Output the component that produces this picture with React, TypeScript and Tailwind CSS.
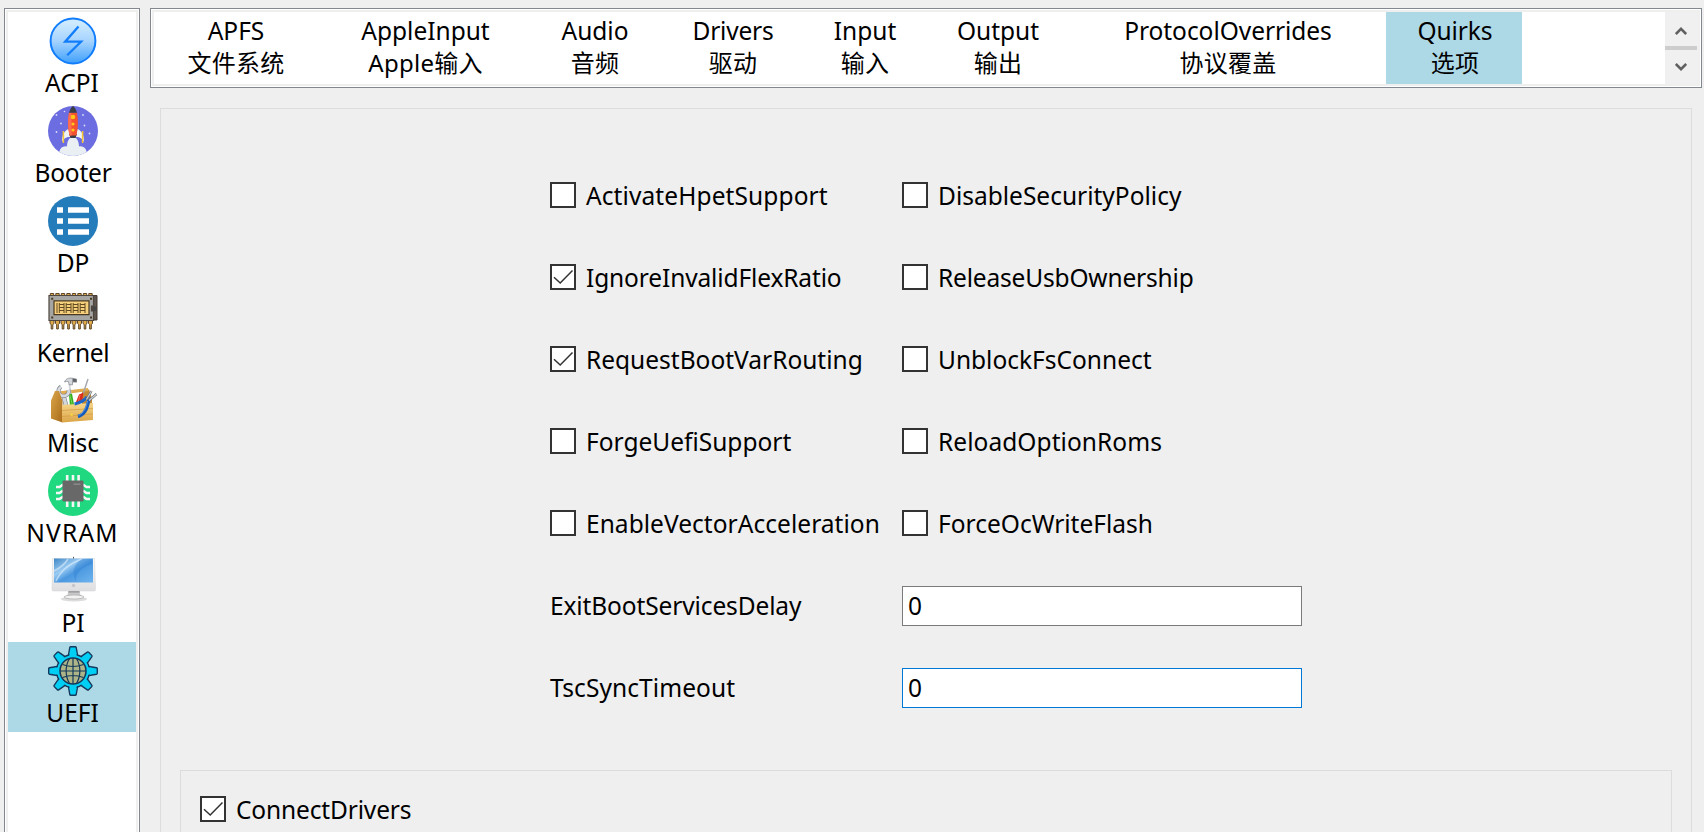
import type { ReactNode } from "react";

const AcpiIcon = () => (
  <svg viewBox="0 0 50 50" className="size-[50px]">
    <defs>
      <linearGradient id="acpi" x1="0" y1="0" x2="0" y2="1">
        <stop offset="0.1" stopColor="#cdeaff" />
        <stop offset="0.5" stopColor="#a5d3ff" />
        <stop offset="1" stopColor="#3fa0fb" />
      </linearGradient>
    </defs>
    <circle cx="25" cy="25" r="22.4" fill="url(#acpi)" stroke="#127dfb" strokeWidth="2" />
    <path d="M30.5 10.5 17.2 25.7H33L19.2 39.3" fill="none" stroke="#127dfb" strokeWidth="2.3" />
  </svg>
);

const BooterIcon = () => (
  <svg viewBox="0 0 50 50" className="size-[50px]">
    <defs>
      <clipPath id="sky">
        <circle cx="25" cy="25" r="25" />
      </clipPath>
    </defs>
    <g clipPath="url(#sky)">
      <rect width="50" height="50" fill="#6c6de0" />
      <g fill="#d9dcf8">
        <circle cx="16.5" cy="5.5" r=".8" />
        <circle cx="8.5" cy="9" r=".9" />
        <circle cx="13" cy="17.5" r=".9" />
        <circle cx="8.5" cy="26" r=".9" />
        <circle cx="35" cy="9" r=".9" />
        <circle cx="36.5" cy="19.5" r=".9" />
        <circle cx="41.5" cy="27.5" r=".9" />
      </g>
      <path d="M11.500 50C10 44 14 39.500 19 40.500 19 35 21.500 31 25 31s6 4 6 9.500c5-1 9 3.500 7.500 9.500Z" fill="#e9eff3" />
      <path d="M20.500 23C16 25 14 29 14 36c3-5 5-5 8.500-5Z" fill="#eef3f6" />
      <path d="M29.500 23C34 25 36 29 36 36c-3-5-5-5-8.500-5Z" fill="#eef3f6" />
      <path d="M15.400 25v12M34.600 25v12" stroke="#f5c431" strokeWidth="1.500" />
      <path d="M21 28h8l-1.500 4h-5Z" fill="#3b3f44" />
      <path d="M21 6.500h8c1.400 8 1.200 16-.6 23h-6.800c-1.800-7-2-15-.6-23Z" fill="#f4512f" />
      <path d="M21 6.500h2.500v23h-1.900c-1.800-7-2-15-.6-23Z" fill="#ff6e50" />
      <path d="M21 6.800c1-3.200 2.500-5.800 4-6.800 1.500 1 3 3.600 4 6.800Z" fill="#3b3f44" />
      <circle cx="25" cy="11" r="2.300" fill="#ffc61a" />
      <circle cx="25" cy="18" r="1.600" fill="#ffc61a" />
      <circle cx="25" cy="24" r="1.600" fill="#ffc61a" />
    </g>
  </svg>
);

const DpIcon = () => (
  <svg viewBox="0 0 50 50" className="size-[50px]">
    <circle cx="25" cy="25" r="25" fill="#247cba" />
    <path
      d="M9 11.200h6v5.600H9zM9 22.200h6v5.600H9zM9 33.200h6v5.600H9zM20 11.200h21v5.600H20zM20 22.200h21v5.600H20zM20 33.200h21v5.600H20z"
      fill="#fff"
    />
  </svg>
);

const legs = [4, 9.5, 15, 20.5, 26, 31.5, 37, 42.5];

const KernelIcon = () => (
  <svg viewBox="0 0 50 50" className="size-[50px]">
    <path d="M44 9.500h5V34h-5z" fill="#5f5650" stroke="#45392f" />
    {legs.map((x) => (
      <g key={x} fill="#e0ab4c" stroke="#5c4426" strokeWidth="1">
        <path d={`M${x - 1.7} 7.500h3.400v3h-3.400z`} />
        <path d={`M${x - 2} 34h4v3.500l-1.200 1v4.500h-1.600v-4.500l-1.200-1z`} />
      </g>
    ))}
    <path d="M1 9.500h44.500V20h-2v5h2v9.500H1z" fill="#a5a5a3" stroke="#4e463e" strokeWidth="1.200" />
    <path d="M45 20.500h3.500v4.500H45z" fill="#454545" />
    <path d="M6 14.800h35v13.800H6z" fill="#f7d07b" stroke="#4a3a22" strokeWidth="1.200" />
    <g fill="#4a3a22">
      <path d="M3.200 11.700h2v2h-2zM42 11.700h2v2h-2zM3.200 30.500h2v2h-2zM42 30.500h2v2h-2z" />
    </g>
    <path
      d="M9 17v10M11.300 17v10M16 17v10M18.200 17v10M23 17v10M25.200 17v10M30 17v10M32.200 17v10M37 17v10M11.300 18.500H16M11.300 21.500H16M11.300 24.500H16M18.200 18.500H23M18.200 21.500H23M18.200 24.500H23M25.200 18.500H30M25.200 21.500H30M25.200 24.500H30M32.200 18.500H37M32.200 21.500H37M32.200 24.500H37"
      stroke="#604922"
      strokeWidth="1"
    />
  </svg>
);

const MiscIcon = () => (
  <svg viewBox="0 0 50 50" className="size-[50px]">
    <defs>
      <linearGradient id="wood" x1="0" y1="0" x2="0" y2="1">
        <stop offset="0" stopColor="#f6d68a" />
        <stop offset="1" stopColor="#dba548" />
      </linearGradient>
      <linearGradient id="woodSide" x1="0" y1="0" x2="1" y2="1">
        <stop offset="0" stopColor="#dba548" />
        <stop offset="1" stopColor="#a86b1b" />
      </linearGradient>
    </defs>
    <path d="M34 13.500h7l3 9v10H34z" fill="#c48b37" />
    <path d="M10 15.500 40 12v3L12 19z" fill="#e0ac52" />
    <path d="M21.500 8 23.500 30" stroke="#d6d9dd" strokeWidth="2" />
    <path d="M21 18.500 24 17.500 26.500 31H22z" fill="#38b01e" />
    <path d="M22 19 24.500 30" stroke="#8be06c" strokeWidth=".7" />
    <path d="M16.500 6C18 2.500 21 1.700 24 2.200l4.500.8v3.200L24.500 6v2.800h-3.400L20.500 5.500C19 5.200 18 5.400 16.500 6z" fill="#d5d8dc" stroke="#7f8389" strokeWidth=".7" />
    <path d="M24.500 2.500 28.500 3.200v2.800l-4-.3z" fill="#5f6368" />
    <path d="M40 3 35 18" stroke="#a3a6ab" strokeWidth="1.400" />
    <path d="M31 18.500 35.500 16.500 34 26H28z" fill="#dd2c1c" />
    <path d="M32 19 30.500 25" stroke="#f4796c" strokeWidth=".8" />
    <path d="M18.500 31 15.500 20" stroke="#7f848a" strokeWidth="4.600" />
    <path d="M18.500 31 15.500 20" stroke="#d3d6da" strokeWidth="3.200" />
    <path d="M13 10.800C9.500 13 9.500 18 13.500 19.500s8-1 7.200-5.700" fill="none" stroke="#7f848a" strokeWidth="4" />
    <path d="M13 10.800C9.500 13 9.500 18 13.500 19.500s8-1 7.200-5.700" fill="none" stroke="#d8dbdf" strokeWidth="2.700" />
    <path d="M3 24.500 7 15h4L14.500 25v21.500L3 42.500z" fill="url(#woodSide)" />
    <path d="M14 29 45 27V44L14 46.500z" fill="url(#wood)" />
    <path d="M14 34.500 45 32.500M14 40.500 45 38" stroke="#d39b42" strokeWidth=".7" />
    <circle cx="23.500" cy="38.500" r="1.500" fill="#f5cf45" />
    <path d="M26.500 28C31 27 35.500 25.500 39 21" fill="none" stroke="#1c65c6" strokeWidth="3" />
    <path d="M30 40.500C37.500 38.500 39.500 31 41 23" fill="none" stroke="#165bbc" strokeWidth="3.400" />
    <path d="M30.500 39.500C36 37 38.500 31 39.500 25" fill="none" stroke="#5d9eea" strokeWidth=".9" />
    <path d="M38.500 23.500 43.500 15M41 24.500 48.500 18M40 20l3 4" stroke="#6f747a" strokeWidth="2.400" />
    <path d="M38.500 23.500 43.500 15M41 24.500 48.500 18" stroke="#cdd0d4" strokeWidth="1.100" />
  </svg>
);

const NvramIcon = () => (
  <svg viewBox="0 0 50 50" className="size-[50px]">
    <circle cx="25" cy="25" r="25" fill="#1fd87f" />
    <path
      d="M19.200 9v32M25 9v32M30.600 9v32M8 21h3.500l3-2H17M8 27h3.500l3-2H17M8 33h3.500l3-2H17M42 21h-3.500l-3-2H33M42 27h-3.500l-3-2H33M42 33h-3.500l-3-2H33"
      fill="none"
      stroke="#f4f7f5"
      strokeWidth="2.600"
    />
    <rect x="14.500" y="14.500" width="21" height="21" rx="1.200" fill="#686868" />
    <path d="M25.500 18.200h7" stroke="#8b8b8b" strokeWidth="1.500" />
  </svg>
);

const PiIcon = () => (
  <svg viewBox="0 0 50 50" className="size-[50px]">
    <defs>
      <linearGradient id="screen" x1="0" y1="0" x2="1" y2="1">
        <stop offset="0" stopColor="#3f86c6" />
        <stop offset="0.350" stopColor="#9bcbf2" />
        <stop offset="0.550" stopColor="#4b98e0" />
        <stop offset="1" stopColor="#6fb4ee" />
      </linearGradient>
      <linearGradient id="chin" x1="0" y1="0" x2="0" y2="1">
        <stop offset="0" stopColor="#fbfbfb" />
        <stop offset="1" stopColor="#dedee0" />
      </linearGradient>
    </defs>
    <ellipse cx="26" cy="43" rx="13" ry="2.500" fill="#dcdcdc" />
    <path d="M20.500 34h11l1.200 6h-13.400z" fill="#c9c9cb" />
    <path d="M20.500 34.500h11v2h-11z" fill="#8e8e92" />
    <ellipse cx="26" cy="41" rx="10" ry="2" fill="#f2f2f2" stroke="#a8a8aa" strokeWidth=".7" />
    <path d="M4.500 2.500h42l1 31q0 1.500-1.500 1.500H5.500Q4 35 4 33.500z" fill="url(#chin)" stroke="#d2d2d4" strokeWidth=".5" />
    <path d="M6 2.500h39V26.500H6z" fill="url(#screen)" />
    <path d="M8 25C12 16 20 8 34 3M6 15C12 12 17 8 20 3" fill="none" stroke="#dff0fd" strokeOpacity=".6" strokeWidth="1.600" />
    <path d="M28 26C27 20 31 12 44 8V3H34C26 8 23 16 28 26z" fill="#2f7fd2" fillOpacity=".4" />
    <path d="M25.500.8v1.700" stroke="#55585c" strokeWidth="1" />
    <circle cx="25.500" cy="29.500" r="1.700" fill="#c6c6ca" />
  </svg>
);

const teeth = [0, 45, 90, 135, 180, 225, 270, 315];

const UefiIcon = () => (
  <svg viewBox="0 0 50 50" className="size-[50px]">
    <g fill="#00cff5" stroke="#15395c" strokeWidth="1.400" strokeLinejoin="round">
      {teeth.map((a) => (
        <path key={a} d="M20.200 10.500 21.800 1.500q.2-.8 1-.8h4.400q.8 0 1 .8l1.600 9z" transform={`rotate(${a} 25 25)`} />
      ))}
      <circle cx="25" cy="25" r="16.500" />
    </g>
    {teeth.map((a) => (
      <path key={a} d="M21 11.500 22 6h6l1 5.500z" fill="#00cff5" transform={`rotate(${a} 25 25)`} />
    ))}
    <circle cx="25" cy="25" r="13" fill="#adb487" stroke="#15395c" strokeWidth="1.500" />
    <path
      d="M25 12v26M12 25h26M14.500 18.500q10.500 4 21 0M14.500 31.500q10.500-4 21 0M21.500 12.500C17 20 17 30 21.500 37.500M28.500 12.500C33 20 33 30 28.500 37.500"
      fill="none"
      stroke="#15395c"
      strokeWidth="1.200"
    />
  </svg>
);

const sections: { name: string; icon: ReactNode; text: string }[] = [
  { name: "ACPI", icon: <AcpiIcon />, text: "mr-[2px]" },
  { name: "Booter", icon: <BooterIcon />, text: "tracking-[-0.2px]" },
  { name: "DP", icon: <DpIcon />, text: "" },
  { name: "Kernel", icon: <KernelIcon />, text: "tracking-[-0.35px]" },
  { name: "Misc", icon: <MiscIcon />, text: "" },
  { name: "NVRAM", icon: <NvramIcon />, text: "tracking-[1.2px] mr-[1px]" },
  { name: "PI", icon: <PiIcon />, text: "" },
  { name: "UEFI", icon: <UefiIcon />, text: "mr-[1px]" },
];

const tabs = [
  { name: "APFS", label: "文件系统", box: "w-[164px]", text: "" },
  { name: "AppleInput", label: "Apple输入", box: "w-[215px]", text: "" },
  { name: "Audio", label: "音频", box: "w-[124px]", text: "" },
  { name: "Drivers", label: "驱动", box: "w-[152px]", text: "tracking-[-0.2px]" },
  { name: "Input", label: "输入", box: "w-[112px]", text: "" },
  { name: "Output", label: "输出", box: "w-[154px]", text: "" },
  { name: "ProtocolOverrides", label: "协议覆盖", box: "w-[306px] mr-[5px]", text: "tracking-[-0.05px]" },
  { name: "Quirks", label: "选项", box: "w-[136px] pl-[2px] bg-[#add8e6]", text: "tracking-[-0.1px]" },
];

const quirks = [
  { name: "ActivateHpetSupport", on: false, text: "tracking-[0.1px]" },
  { name: "DisableSecurityPolicy", on: false, text: "" },
  { name: "IgnoreInvalidFlexRatio", on: true, text: "tracking-[-0.13px]" },
  { name: "ReleaseUsbOwnership", on: false, text: "tracking-[-0.18px]" },
  { name: "RequestBootVarRouting", on: true, text: "" },
  { name: "UnblockFsConnect", on: false, text: "" },
  { name: "ForgeUefiSupport", on: false, text: "" },
  { name: "ReloadOptionRoms", on: false, text: "tracking-[0.06px]" },
  { name: "EnableVectorAcceleration", on: false, text: "tracking-[0.04px]" },
  { name: "ForceOcWriteFlash", on: false, text: "" },
];

const delays = [
  { name: "ExitBootServicesDelay", border: "border-[#7a7a7a]", text: "tracking-[-0.12px]" },
  { name: "TscSyncTimeout", border: "border-[#0078d7]", text: "tracking-[0.08px]" },
];

function Check({ name, on, text }: { name: string; on: boolean; text: string }) {
  return (
    <div className="flex h-[26px] items-center">
      <span className="flex size-[26px] shrink-0 items-center justify-center border-2 border-[#333] bg-white">
        {on && (
          <svg viewBox="0 0 22 22" className="size-[22px]">
            <path d="M2 11.200 8.200 17 20.500 4.500" fill="none" stroke="#333" strokeWidth="1.500" />
          </svg>
        )}
      </span>
      <span className={`ml-[10px] whitespace-nowrap pt-[2px] leading-[26px] ${text}`}>{name}</span>
    </div>
  );
}

export default function App() {
  return (
    <div className="flex h-[832px] w-[1704px] overflow-hidden bg-[#efefef] pl-1 pt-2 font-['Noto_Sans','Noto_Sans_CJK_SC',sans-serif] text-[24.500px] text-black">
      <nav className="h-[860px] w-[136px] shrink-0 border border-[#828790] bg-white p-px">
        <div className="flex h-full flex-col border-2 border-[#efefef] bg-white">
          {sections.map((s) => (
            <div
              key={s.name}
              className={`flex h-[90px] shrink-0 flex-col items-center pl-[2px] pt-1 ${s.name === "UEFI" ? "bg-[#add8e6]" : ""}`}
            >
              {s.icon}
              <span className={`mt-1 leading-[26px] ${s.text}`}>{s.name}</span>
            </div>
          ))}
        </div>
      </nav>

      <main className="ml-[10px] flex w-[1552px] shrink-0 flex-col">
        <div className="h-20 shrink-0 border border-[#828790] bg-white p-px">
          <div className="flex h-full border-2 border-[#efefef] bg-white">
            {tabs.map((t) => (
              <div key={t.name} className={`flex shrink-0 flex-col items-center pt-[3px] ${t.box}`}>
                <span className={`h-8 whitespace-nowrap leading-8 ${t.text}`}>{t.name}</span>
                <span className="h-8 whitespace-nowrap text-[24px] leading-8 tracking-[0.25px]">{t.label}</span>
              </div>
            ))}
            <div className="ml-auto flex w-[33px] flex-col bg-[#f0f0f0] pr-px">
              <div className="flex h-[34px] items-center justify-center pt-1">
                <svg viewBox="0 0 12 10" className="h-[10px] w-3">
                  <path d="M.8 8 6 2.800 11.200 8" fill="none" stroke="#606060" strokeWidth="2.600" />
                </svg>
              </div>
              <div className="h-1 bg-[#cdcdcd]" />
              <div className="flex h-[34px] items-center justify-center">
                <svg viewBox="0 0 12 10" className="h-[10px] w-3">
                  <path d="M.8 2 6 7.200 11.200 2" fill="none" stroke="#606060" strokeWidth="2.600" />
                </svg>
              </div>
            </div>
          </div>
        </div>

        <section className="ml-[10px] mt-5 flex h-[760px] w-[1532px] shrink-0 flex-col border border-[#dcdcdc] px-[19px]">
          <div className="ml-[370px] mt-[73px] grid grid-cols-[352px_400px] gap-y-14">
            {quirks.map((q) => (
              <Check key={q.name} {...q} />
            ))}
          </div>
          <div className="ml-[370px] mt-[50px] flex flex-col gap-[42px]">
            {delays.map((d) => (
              <div key={d.name} className="flex h-10 items-center">
                <span className={`w-[352px] whitespace-nowrap ${d.text}`}>{d.name}</span>
                <div className={`flex h-10 w-[400px] items-center border bg-white pl-[5px] pt-px ${d.border}`}>0</div>
              </div>
            ))}
          </div>
          <div className="mt-[62px] h-[120px] border border-[#dcdcdc] pl-[19px] pt-[25px]">
            <Check name="ConnectDrivers" on text="tracking-[-0.15px]" />
          </div>
        </section>
      </main>
    </div>
  );
}
